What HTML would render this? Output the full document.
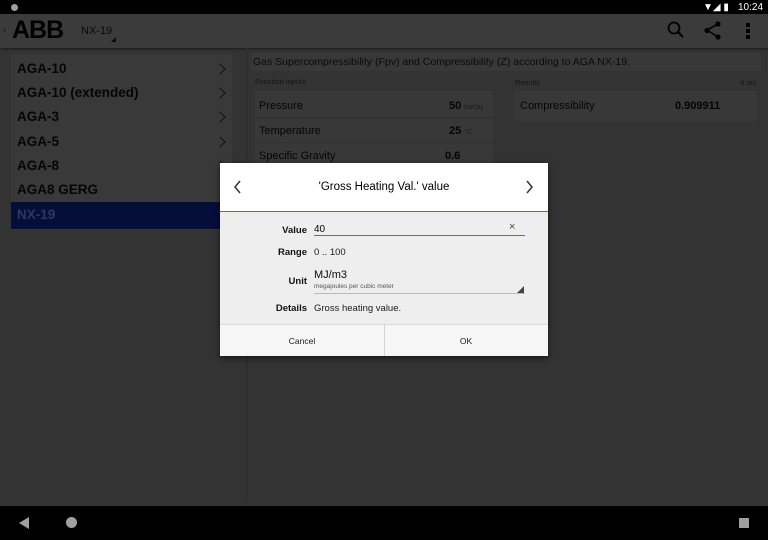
<!DOCTYPE html>
<html><head><style>
*{margin:0;padding:0;box-sizing:border-box}
body{width:768px;height:540px;background:#333;font-family:"Liberation Sans",sans-serif;position:relative;overflow:hidden}
.abs{position:absolute}
.status{left:0;top:0;width:768px;height:14px;background:#000}
.tool{left:0;top:14px;width:768px;height:34px;background:#3b3b3b;box-shadow:0 1px 2px rgba(0,0,0,.5)}
.nav{left:0;top:506px;width:768px;height:34px;background:#000}
.list{left:11px;top:54px;width:221px;height:176px;background:#393939}
.item{position:absolute;left:6px;font-weight:bold;font-size:13.5px;color:#050505}
.chev{position:absolute;right:8px;width:8px;height:8px;border-right:1.5px solid #111;border-top:1.5px solid #111;transform:rotate(45deg)}
.sel{left:11px;top:202px;width:221px;height:27px;background:#050e38}
.t{color:#050505}
.dlg{left:220px;top:163px;width:328px;height:193px;background:#eeeeee;box-shadow:0 2px 6px rgba(0,0,0,.6)}
.lbl{position:absolute;width:87px;text-align:right;font-size:9.5px;font-weight:bold;color:#111}
.val{position:absolute;left:94px;font-size:9.5px;color:#1a1a1a}
</style></head><body>
<div class="abs status"></div>
<div class="abs" style="left:11px;top:4px;width:7px;height:7px;border-radius:50%;background:#a0a0a0"></div>
<div class="abs" style="left:703px;top:2px;color:#fff;font-size:10px">▼◢ ▮</div>
<div class="abs" style="left:738px;top:2px;color:#fff;font-size:10px">10:24</div>
<div class="abs tool"></div>
<div class="abs" style="left:3px;top:25px;font-size:10px;color:#111">‹</div>
<div class="abs" style="left:12px;top:16px;font-size:25px;font-weight:900;color:#000;letter-spacing:-1px">ABB</div>
<div class="abs" style="left:81px;top:25px;font-size:11px;color:#0a0a0a">NX-19</div>
<div class="abs" style="left:111px;top:37px;width:0;height:0;border-left:5px solid transparent;border-bottom:5px solid #0a0a0a"></div>
<svg class="abs" style="left:666px;top:20px" width="20" height="20"><circle cx="8" cy="8" r="5.5" fill="none" stroke="#000" stroke-width="1.8"/><path d="M12 12 L17 17" stroke="#000" stroke-width="2"/></svg>
<svg class="abs" style="left:702px;top:20px" width="22" height="22"><path d="M16 4 L5 10 L16 17" fill="none" stroke="#000" stroke-width="1.6"/><circle cx="16" cy="4" r="2.6" fill="#000"/><circle cx="5" cy="10.5" r="2.6" fill="#000"/><circle cx="16" cy="17" r="2.6" fill="#000"/></svg>
<div class="abs" style="left:746px;top:23px;width:4px;height:4px;background:#000"></div>
<div class="abs" style="left:746px;top:29px;width:4px;height:4px;background:#000"></div>
<div class="abs" style="left:746px;top:35px;width:4px;height:4px;background:#000"></div>

<div class="abs list">
<div class="item" style="top:7px">AGA-10</div><div class="chev" style="top:11px"></div>
<div class="item" style="top:31px">AGA-10 (extended)</div><div class="chev" style="top:35px"></div>
<div class="item" style="top:55px">AGA-3</div><div class="chev" style="top:59px"></div>
<div class="item" style="top:80px">AGA-5</div><div class="chev" style="top:84px"></div>
<div class="item" style="top:104px">AGA-8</div><div class="chev" style="top:108px"></div>
<div class="item" style="top:128px">AGA8 GERG</div>
</div>
<div class="abs sel"><div class="item" style="top:5px;color:#2c3764">NX-19</div></div>

<div class="abs" style="left:246px;top:48px;width:2px;height:450px;background:#2f2f2f"></div>
<div class="abs" style="left:251px;top:53px;width:510px;height:18px;background:#383838"></div>
<div class="abs t" style="left:253px;top:56px;font-size:10.5px;color:#0a0a0a">Gas Supercompressibility (Fpv) and Compressibility (Z) according to AGA NX-19.</div>
<div class="abs" style="left:255px;top:77px;font-size:7.5px;color:#151515">Function inputs</div>
<div class="abs" style="left:515px;top:78px;font-size:7.5px;color:#151515">Results</div>
<div class="abs" style="left:740px;top:78px;font-size:7.5px;color:#151515">4 ms</div>
<div class="abs" style="left:255px;top:91px;width:238px;height:73px;background:#383838"></div>
<div class="abs" style="left:256px;top:117px;width:237px;height:1px;background:#303030"></div>
<div class="abs" style="left:256px;top:142px;width:237px;height:1px;background:#303030"></div>
<div class="abs t" style="left:259px;top:100px;font-size:11px">Pressure</div>
<div class="abs t" style="left:449px;top:100px;font-size:11px;font-weight:bold">50 <span style="font-size:7px;font-weight:normal;color:#1a1a1a">bar(a)</span></div>
<div class="abs t" style="left:259px;top:125px;font-size:11px">Temperature</div>
<div class="abs t" style="left:449px;top:125px;font-size:11px;font-weight:bold">25 <span style="font-size:7px;font-weight:normal;color:#1a1a1a">°C</span></div>
<div class="abs t" style="left:259px;top:150px;font-size:11px">Specific Gravity</div>
<div class="abs t" style="left:445px;top:150px;font-size:11px;font-weight:bold">0.6</div>
<div class="abs" style="left:514px;top:91px;width:243px;height:30px;background:#383838"></div>
<div class="abs t" style="left:520px;top:100px;font-size:11px">Compressibility</div>
<div class="abs t" style="left:675px;top:100px;font-size:11px;font-weight:bold">0.909911</div>

<div class="abs dlg">
<div style="position:absolute;left:0;top:0;width:328px;height:49px;background:#fff;border-bottom:1.5px solid #2088b0"></div>
<svg style="position:absolute;left:13px;top:17px" width="10" height="14"><path d="M7 1 L2 7 L7 13" fill="none" stroke="#333" stroke-width="1.5"/></svg>
<svg style="position:absolute;left:304px;top:17px" width="10" height="14"><path d="M3 1 L8 7 L3 13" fill="none" stroke="#333" stroke-width="1.5"/></svg>
<div style="position:absolute;left:0;width:328px;top:18px;text-align:center;font-size:11.5px;color:#000">'Gross Heating Val.' value</div>
<div class="lbl" style="top:62px">Value</div>
<div class="val" style="top:61px;color:#0a0a0a;font-size:10px">40</div>
<div style="position:absolute;left:289px;top:58px;font-size:11px;color:#444">×</div>
<div style="position:absolute;left:94px;top:72px;width:211px;height:1px;background:#6a5cc0"></div>
<div class="lbl" style="top:84px">Range</div>
<div class="val" style="top:84px">0 .. 100</div>
<div class="lbl" style="top:113px">Unit</div>
<div class="val" style="top:106px;font-size:11px;color:#0a0a0a">MJ/m3</div>
<div class="val" style="top:120px;font-size:6.5px;color:#555">megajoules per cubic meter</div>
<div style="position:absolute;left:297px;top:123px;border-left:7px solid transparent;border-bottom:7px solid #444"></div>
<div style="position:absolute;left:94px;top:130px;width:211px;height:1px;background:#bbb"></div>
<div class="lbl" style="top:140px">Details</div>
<div class="val" style="top:140px">Gross heating value.</div>
<div style="position:absolute;left:0;top:161px;width:328px;height:32px;background:#f6f6f6;border-top:1px solid #dadada"></div>
<div style="position:absolute;left:164px;top:161px;width:1px;height:32px;background:#d4d4d4"></div>
<div style="position:absolute;left:0;width:164px;top:173px;text-align:center;font-size:8.5px;color:#1a1a1a">Cancel</div>
<div style="position:absolute;left:164px;width:164px;top:173px;text-align:center;font-size:8.5px;color:#1a1a1a">OK</div>
</div>

<div class="abs nav"></div>
<div class="abs" style="left:19px;top:517px;border-right:10px solid #a0a0a0;border-top:6px solid transparent;border-bottom:6px solid transparent"></div>
<div class="abs" style="left:66px;top:517px;width:11px;height:11px;border-radius:50%;background:#a0a0a0"></div>
<div class="abs" style="left:739px;top:518px;width:10px;height:10px;background:#a0a0a0"></div>
</body></html>
